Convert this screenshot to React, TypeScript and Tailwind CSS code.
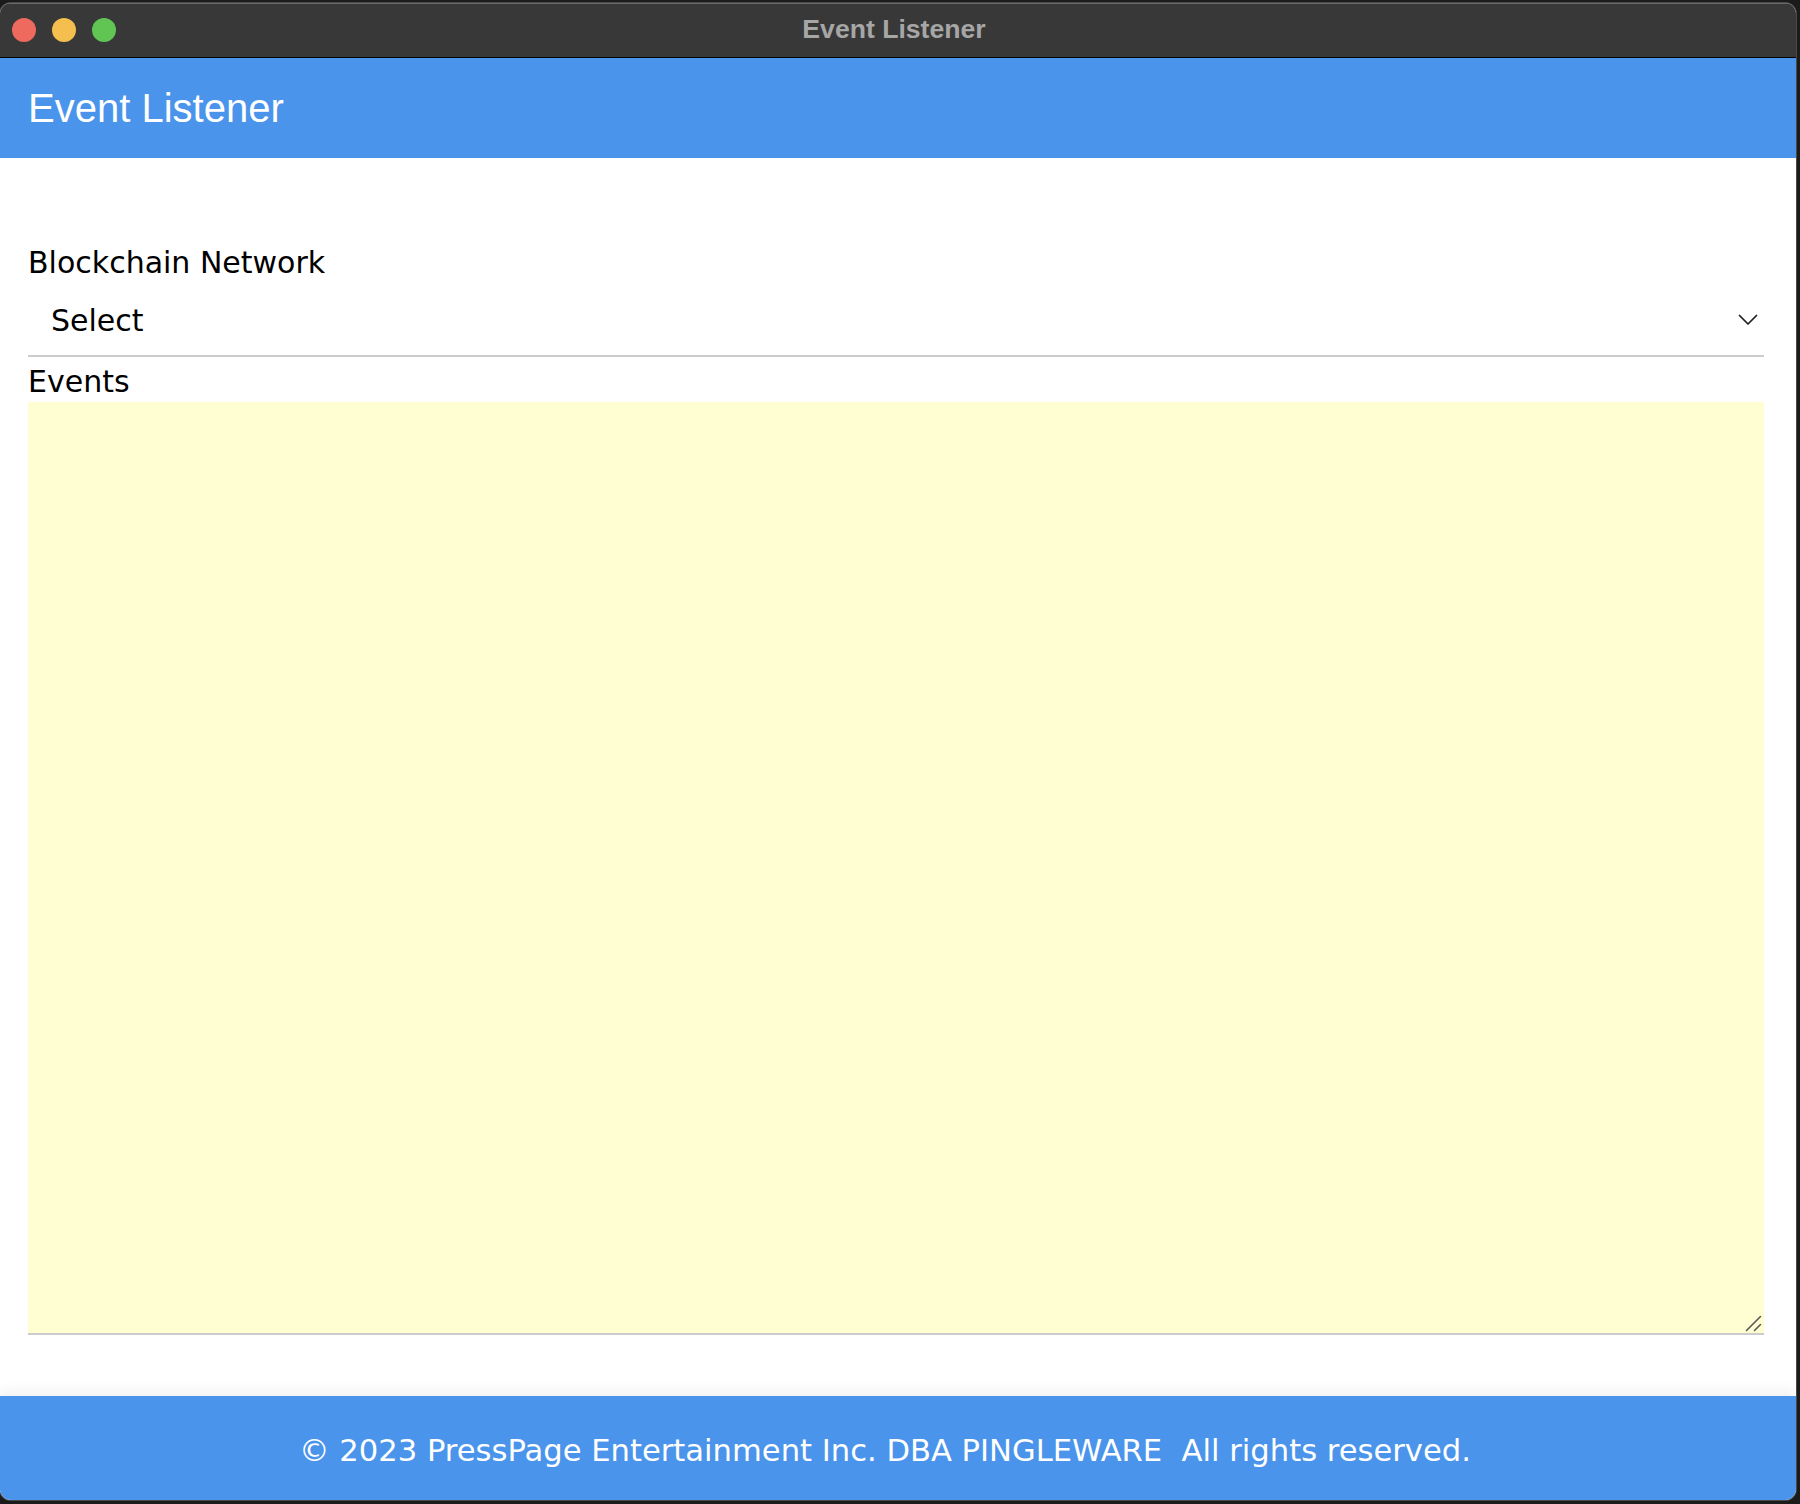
import React from 'react';

const TrafficLights: React.FC = () => (
  <div className="absolute left-[12px] top-0 flex h-full items-center gap-[16px] pb-[1px]">
    <span className="h-[24px] w-[24px] rounded-full bg-[#ee6a5f]" />
    <span className="h-[24px] w-[24px] rounded-full bg-[#f5bf4f]" />
    <span className="h-[24px] w-[24px] rounded-full bg-[#61c554]" />
  </div>
);

const Chevron: React.FC = () => (
  <svg width="20" height="12" viewBox="0 0 20 12" fill="none">
    <path d="M1.5 1.5 L10 10 L18.5 1.5" stroke="#1f1f1f" strokeWidth="1.7" strokeLinecap="round" strokeLinejoin="round" />
  </svg>
);

// textarea grip drawn like the native mac one
const ResizeGrip: React.FC = () => (
  <svg className="pointer-events-none absolute bottom-[3px] right-[2px]" width="17" height="17" viewBox="0 0 17 17" fill="none">
    <path d="M1.5 15.5 L15.5 1.5" stroke="#5a5a5a" strokeWidth="1.6" strokeLinecap="round" />
    <path d="M9.5 15.5 L15.5 9.5" stroke="#5a5a5a" strokeWidth="1.6" strokeLinecap="round" />
  </svg>
);

const App: React.FC = () => {
  return (
    <div className="h-[1504px] w-[1800px] bg-[#1b1b1b] pt-[3px]">
      <div className="flex h-[1497px] w-[1796px] flex-col overflow-hidden rounded-[11px] bg-white shadow-[0_0_0_1px_#4a4a4a]">
        {/* window title bar */}
        <div className="relative flex h-[55px] shrink-0 items-center justify-center border-t border-[#6a6a6a] border-b border-b-black bg-[#383838]">
          <TrafficLights />
          <span className="mb-[2px] ml-[-8px] text-[26.6px] font-bold text-[#a6a6a6] [font-family:'Liberation_Sans',Arial,sans-serif]">
            Event Listener
          </span>
        </div>

        {/* app header */}
        <header className="flex h-[100px] shrink-0 items-center bg-[#4a94eb] pl-[28px]">
          <h1 className="text-[40px] leading-[46px] text-white [font-family:'Liberation_Sans',Arial,sans-serif]">
            Event Listener
          </h1>
        </header>

        {/* form */}
        <main className="flex flex-1 flex-col pl-[28px] pr-[32px] pt-[87px] text-[30px] leading-[35px] text-black [font-family:'DejaVu_Sans',Verdana,sans-serif]">
          <label className="h-[35px]">Blockchain Network</label>
          <div className="flex h-[77px] items-start justify-between border-b-2 border-[#cccccc] pl-[23px] pr-[6px] pt-[23px]">
            <span>Select</span>
            <span className="mt-[11px]">
              <Chevron />
            </span>
          </div>
          <label className="mt-[7px] h-[35px]">Events</label>
          <div className="relative mt-[3px] h-[933px] w-full">
            <textarea
              className="block h-full w-full resize-none border-b-2 border-[#cccccc] bg-[#fffdd2] p-2 text-[18px] outline-none"
              readOnly
            />
            <ResizeGrip />
          </div>
        </main>

        {/* footer */}
        <footer className="flex h-[104px] shrink-0 items-center justify-center bg-[#4a94eb] pr-[26px] pt-[5px] text-[30.6px] leading-[35px] text-white shadow-[0_-5px_12px_rgba(0,0,0,0.06)] [font-family:'DejaVu_Sans',Verdana,sans-serif]">
          <span className="whitespace-pre">© 2023 PressPage Entertainment Inc. DBA PINGLEWARE  All rights reserved.</span>
        </footer>
      </div>
    </div>
  );
};

export default App;
